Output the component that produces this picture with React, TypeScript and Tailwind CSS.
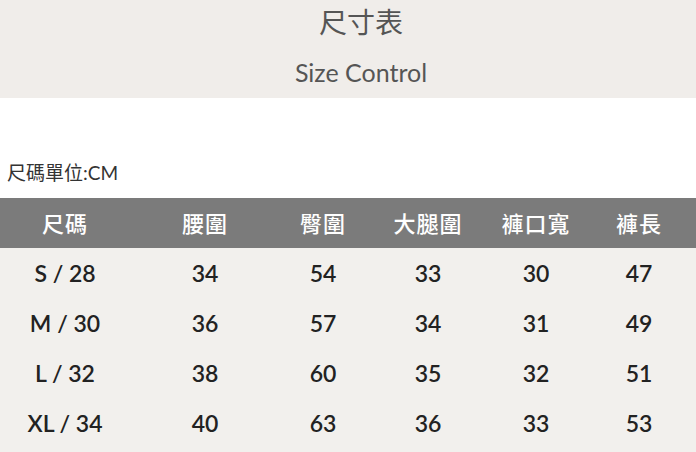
import React from "react";

const font = { fontFamily: '"Lato", "Noto Sans CJK TC", sans-serif' };

const cols = ["w-[130px]", "w-[150px]", "w-[86px]", "w-[124px]", "w-[92px]", "w-[114px]"];

const headers = ["尺碼", "腰圍", "臀圍", "大腿圍", "褲口寬", "褲長"];

const rows = [
  ["S / 28", "34", "54", "33", "30", "47"],
  ["M / 30", "36", "57", "34", "31", "49"],
  ["L / 32", "38", "60", "35", "32", "51"],
  ["XL / 34", "40", "63", "36", "33", "53"],
];

function App() {
  return (
    <div className="w-[696px] h-[452px] overflow-hidden bg-white" style={font}>
      <div className="h-[98px] bg-[#f0edea] flex flex-col items-center pl-[26px] text-[#555]">
        <h1 className="mt-[3px] h-[38px] text-[28px] leading-[38px]">尺寸表</h1>
        <p className="mt-[14px] text-[25px] leading-[34px]">Size Control</p>
      </div>
      <div className="h-[100px] flex items-end pb-[12px] pl-[7px]">
        <span className="text-[19px] leading-[26px] text-[#333]">尺碼單位:CM</span>
      </div>
      <div className="h-[50px] bg-[#7b7b7b] flex items-center text-white">
        {headers.map((h, i) => (
          <div key={h} className={`${cols[i]} text-center text-[22px] font-medium tracking-[1px]`}>
            {h}
          </div>
        ))}
      </div>
      <div className="bg-[#f2f0ed] h-[204px]">
        {rows.map((r) => (
          <div key={r[0]} className="h-[50px] flex items-center text-[#222]">
            {r.map((c, i) => (
              <div key={i} className={`${cols[i]} text-center text-[23px] font-semibold`}>
                {c}
              </div>
            ))}
          </div>
        ))}
      </div>
    </div>
  );
}

export default App;
